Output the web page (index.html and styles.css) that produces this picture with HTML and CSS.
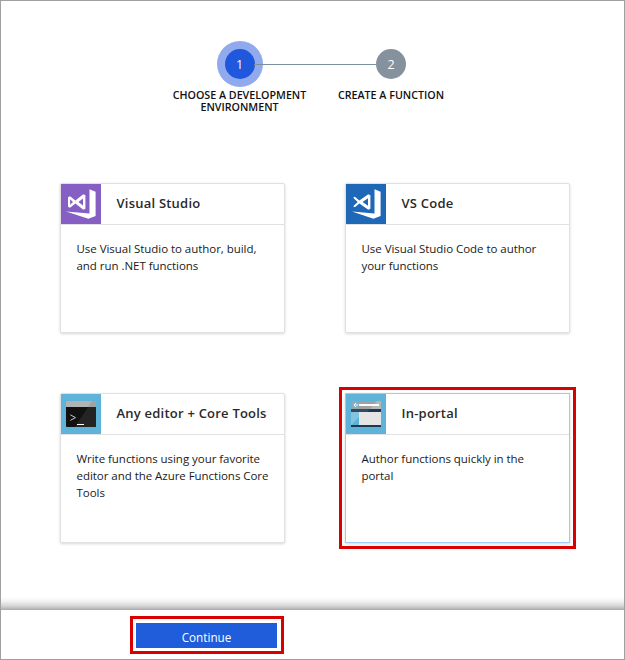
FILE: index.html
```html
<!DOCTYPE html>
<html lang="en">
<head>
<meta charset="utf-8">
<title>Azure Functions quickstart</title>
<link rel="stylesheet" href="styles.css">
</head>
<body>
<div class="page">
  <main class="content">
    <ol class="steps">
      <li class="step active"><span class="dot">1</span><span class="label">CHOOSE A DEVELOPMENT<br>ENVIRONMENT</span></li>
      <li class="step"><span class="dot">2</span><span class="label">CREATE A FUNCTION</span></li>
    </ol>
    <section class="cards">
      <article class="card">
        <header>
          <svg class="icon purple" viewBox="0 0 40 40"><path fill="#fff" d="M28.5 5.2 34.6 7.7V32L27.4 34.8 5 27.4 28.5 29.6ZM22.3 10.2 24.4 11.2V24.8L22.3 25.8 14.4 19.6 9 23.8 7 22.8V13.2L9 12.2 14.4 16.4ZM22 14.4 17.4 18 22 21.6ZM9.1 15.2V20.8L12 18Z"/></svg>
          <h2>Visual Studio</h2>
        </header>
        <p>Use Visual Studio to author, build,<br>and run .NET functions</p>
      </article>
      <article class="card">
        <header>
          <svg class="icon blue" viewBox="0 0 40 40"><path fill="#fff" d="M28.5 5.2 34.6 7.7V32L27.4 34.8 6 27.4 28.5 29.6ZM22.3 10.2 24.4 11.2V24.8L22.3 25.8 13.4 19.6 8.8 23.2 7.2 22.3 11.7 18 7.2 13.7 8.8 12.8 13.4 16.4ZM22 14.2 16.6 18 22 21.8Z"/></svg>
          <h2>VS Code</h2>
        </header>
        <p>Use Visual Studio Code to author<br>your functions</p>
      </article>
      <article class="card">
        <header>
          <svg class="icon sky" viewBox="0 0 40 40"><path fill="#111" d="M5 13h30v19q0 1-1 1H6q-1 0-1-1Z"/><path fill="#a1a4a6" d="M6 7h28q1 0 1 1v5H5V8q0-1 1-1Z"/><path fill="#b0b2b3" d="M6 7h25l-4 6H5V8q0-1 1-1Z"/><path fill="#242424" d="M27 13h8v19q0 1-1 1H14Z"/><path d="m9.3 20.8 5.2 2.8-5.2 2.8" fill="none" stroke="#c8c8c8"/><path fill="#fff" d="M16 30h7v1h-7z"/></svg>
          <h2>Any editor + Core Tools</h2>
        </header>
        <p>Write functions using your favorite<br>editor and the Azure Functions Core<br>Tools</p>
      </article>
      <article class="card selected">
        <header>
          <svg class="icon sky" viewBox="0 0 40 40"><path fill="#e5e5e5" d="M5 18h30v13H5z"/><path fill="#a0a1a2" d="M6 7h28q1 0 1 1v7H5V8q0-1 1-1Z"/><path fill="#b6b7b7" d="M31 7 24 15h11V8q0-1-1-1Z"/><path fill="#1f3850" d="M5 15h30v3H5zM5 31h30v2H5z"/><path fill="#334b61" d="M5 15h19l-3 3H5z"/><path fill="#59b4d9" d="M5 18h8v13H5z"/><path fill="#83c5e0" d="M5 18h8v5L5 31z"/><circle cx="9.5" cy="11" r="3" fill="#69bcdf"/><path fill="#fff" d="M13 10h20v2H13z"/><path d="M12 11H8m2-2-2 2 2 2" fill="none" stroke="#fff" stroke-width=".9"/></svg>
          <h2>In-portal</h2>
        </header>
        <p>Author functions quickly in the<br>portal</p>
      </article>
    </section>
  </main>
  <footer class="footer">
    <div class="callout"><button>Continue</button></div>
  </footer>
</div>
</body>
</html>
```
FILE: styles.css
```css
* { box-sizing: border-box; }
body { margin: 0; background: #fff; color: #1a1a1a; font-family: "Open Sans", "Noto Sans", sans-serif; }
.page { width: 625px; height: 660px; border: 1px solid #a0a0a0; display: flex; flex-direction: column; overflow: hidden; }
.content { flex: none; height: 609px; padding: 48px 0 0 59px; background: linear-gradient(#fff 0 596px, #f3f3f3 600px, #d5d5d5 605px, #aaa 609px); }
.steps { list-style: none; margin: 0 0 0 104px; padding: 0; width: 303px; height: 134px; display: grid; grid-template-columns: 151px 152px; }
.step { display: flex; flex-direction: column; align-items: center; position: relative; }
.dot { width: 30px; height: 30px; border-radius: 50%; background: #85929e; color: #fff; font-size: 12.5px; line-height: 31px; text-align: center; z-index: 1; }
.active .dot { background: #1f58dd; box-shadow: 0 0 0 8px #90aaed; }
.active::after { content: ""; position: absolute; left: 90px; top: 15px; width: 122px; height: 1px; background: #7b8f9d; z-index: 2; }
.label { margin-top: 10px; font-size: 10.7px; line-height: 12px; font-weight: 600; text-align: center; white-space: nowrap; color: #111; }
.cards { display: grid; grid-template-columns: 225px 225px; grid-auto-rows: 150px; gap: 60px; }
.card { border: 1px solid #e1e1e1; border-radius: 2px; background: #fff; box-shadow: 0 1px 3px rgba(0,0,0,.16); }
.selected { border-color: #9fcaf5; border-radius: 0; outline: 3px solid #d90000; outline-offset: 3px; }
.card header { height: 41px; display: flex; border-bottom: 1px solid #e1e1e1; }
.icon { width: 40px; height: 40px; flex: none; }
.purple { background: #865fc5; }
.blue { background: #1e68b7; }
.sky { background: #5fb3d8; }
h2 { margin: 0 0 0 15.5px; font-size: 13px; font-weight: 600; line-height: 39px; letter-spacing: .22px; white-space: nowrap; color: #2a2a2a; }
.card p { margin: 15px 0 0 15.5px; font-size: 11.5px; line-height: 17px; letter-spacing: -.04px; white-space: nowrap; }
.footer { height: 49px; padding: 6px 0 0 129px; }
.callout { width: 154px; height: 38px; border: 3px solid #d90000; padding: 4px 3px 3px; display: flex; }
button { width: 141px; height: 25px; border: 0; padding: 4px 0 0; background: #1f5ddb; color: #fff; font: 11.7px/21px "Open Sans", sans-serif; }
```
